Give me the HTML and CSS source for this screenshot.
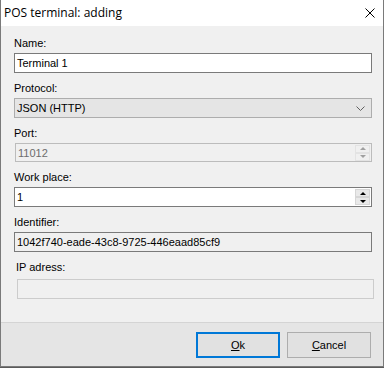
FILE: index.html
```html
<!DOCTYPE html>
<html>
  <head>
    <title>POS terminal: adding</title>
    <link rel="stylesheet" href="styles.css">
  </head>
  <body>
    <div class="window">
      <div class="titlebar">
        <span class="title">POS terminal: adding</span>
        <svg class="close" width="10" height="10" viewBox="0 0 10 10">
          <path d="M0.5 0.5 L9.5 9.5 M9.5 0.5 L0.5 9.5" stroke="#000" stroke-width="1" fill="none"/>
        </svg>
      </div>
      <div class="client">
        <div class="form-group">
          <label>Name:</label>
          <div class="field edit">Terminal 1</div>
        </div>
        <div class="form-group">
          <label>Protocol:</label>
          <div class="field combo">
            <span>JSON (HTTP)</span>
            <svg class="chevron" width="9" height="5" viewBox="0 0 9 5">
              <path d="M0.5 0.5 L4.5 4.5 L8.5 0.5" stroke="#606060" stroke-width="1" fill="none"/>
            </svg>
          </div>
        </div>
        <div class="form-group">
          <label>Port:</label>
          <div class="field numeric disabled port">
            <span>11012</span>
            <div class="spin">
              <div class="spin-btn"><span class="arrow up"></span></div>
              <div class="spin-btn"><span class="arrow down"></span></div>
            </div>
          </div>
        </div>
        <div class="form-group">
          <label>Work place:</label>
          <div class="field numeric edit">
            <span>1</span>
            <div class="spin">
              <div class="spin-btn"><span class="arrow up"></span></div>
              <div class="spin-btn"><span class="arrow down"></span></div>
            </div>
          </div>
        </div>
        <div class="form-group">
          <label>Identifier:</label>
          <div class="field readonly">1042f740-eade-43c8-9725-446eaad85cf9</div>
        </div>
        <div class="form-group ip">
          <label>IP adress:</label>
          <div class="field empty"></div>
        </div>
      </div>
      <div class="footer">
        <button class="btn default"><u>O</u>k</button>
        <button class="btn"><u>C</u>ancel</button>
      </div>
    </div>
  </body>
</html>
```

FILE: styles.css
```css
* {
  box-sizing: border-box;
}

body {
  margin: 0;
  padding: 0;
  background: #5a5a5a;
  font-family: "Liberation Sans", Arial, sans-serif;
  font-size: 11px;
}

.window {
  width: 384px;
  height: 367px;
  background: #f0f0f0;
  border: 1px solid #7a7a7a;
  border-top: none;
  display: flex;
  flex-direction: column;
}

.titlebar {
  height: 26px;
  background: #fff;
  display: flex;
  align-items: center;
  justify-content: space-between;
  padding: 0 8px 1px 3px;
}

.title {
  font-family: "Open Sans", "Noto Sans", sans-serif;
  font-size: 12px;
  color: #000;
}

.client {
  flex: 1;
  padding: 11px 11px 0 13px;
}

.form-group {
  margin-bottom: 9px;
}

label {
  display: block;
  height: 13px;
  line-height: 13px;
  margin-bottom: 3px;
  color: #000;
}

.field {
  height: 20px;
  width: 358px;
  border: 1px solid #7a7a7a;
  padding: 0 2px;
  line-height: 18px;
  color: #000;
  display: flex;
  align-items: center;
  justify-content: space-between;
}

.edit {
  background: #fff;
}

.combo {
  background: #e5e5e5;
  border-color: #adadad;
  padding-right: 6px;
}

.numeric {
  padding-right: 1px;
}

.port {
  height: 19px;
  width: 357px;
  margin-left: 1px;
  margin-top: 1px;
}

.disabled {
  background: #f0f0f0;
  border-color: #bcbcbc;
  color: #6d6d6d;
}

.readonly {
  background: #f0f0f0;
  border-color: #7a7a7a;
}

.ip label {
  padding-left: 2px;
  margin-bottom: 5px;
}

.empty {
  margin-left: 3px;
  width: 357px;
  background: #f0f0f0;
  border-color: #cccccc;
}

.spin {
  width: 15px;
  height: 16px;
  display: flex;
  flex-direction: column;
}

.spin-btn {
  flex: 1;
  background: #e9e9e9;
  border: 1px solid #d6d6d6;
  display: flex;
  align-items: center;
  justify-content: center;
}

.arrow {
  width: 0;
  height: 0;
  border-left: 3px solid transparent;
  border-right: 3px solid transparent;
}

.arrow.up {
  border-bottom: 3px solid #000;
}

.arrow.down {
  border-top: 3px solid #000;
}

.disabled .spin-btn {
  background: #f0f0f0;
  border-color: #e3e3e3;
}

.disabled .arrow.up {
  border-bottom-color: #a0a0a0;
}

.disabled .arrow.down {
  border-top-color: #a0a0a0;
}

.footer {
  height: 44px;
  background: #e5e5e5;
  border-top: 1px solid #d4d4d4;
  display: flex;
  justify-content: flex-end;
  gap: 7px;
  padding: 9px 12px 0 0;
}

.btn {
  width: 84px;
  height: 26px;
  background: #e1e1e1;
  border: 1px solid #adadad;
  font-family: "Liberation Sans", Arial, sans-serif;
  font-size: 11px;
  color: #000;
  padding: 0;
}

.btn.default {
  border: 2px solid #0078d7;
}
```
